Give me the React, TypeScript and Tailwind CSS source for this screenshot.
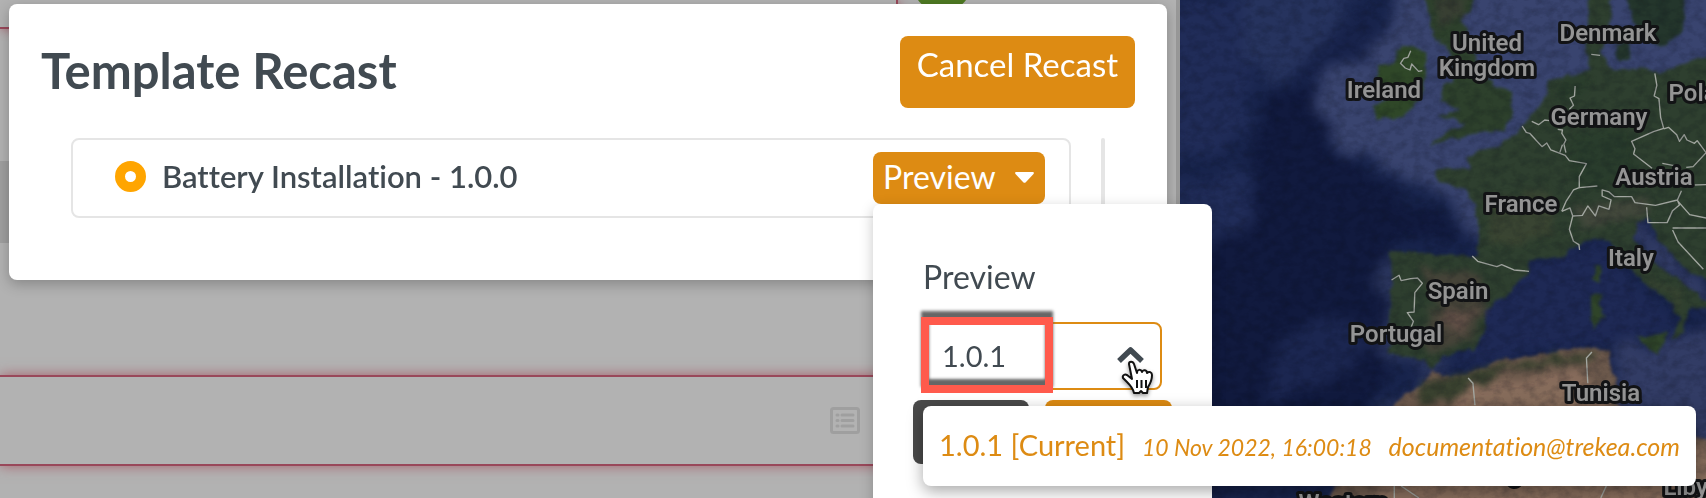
import React from "react";

const labels = [
  { name: "Denmark", x: 428, y: 41 },
  { name: "United", x: 307, y: 51 },
  { name: "Kingdom", x: 307, y: 76 },
  { name: "Ireland", x: 204, y: 98 },
  { name: "Germany", x: 419, y: 125 },
  { name: "Poland", x: 526, y: 101 },
  { name: "Austria", x: 474, y: 185 },
  { name: "France", x: 341, y: 212 },
  { name: "Italy", x: 451, y: 266 },
  { name: "Spain", x: 278, y: 299 },
  { name: "Portugal", x: 216, y: 342 },
  { name: "Tunisia", x: 421, y: 401 },
  { name: "Algeria", x: 344, y: 481 },
  { name: "Libya", x: 512, y: 495 },
  { name: "Western", x: 163, y: 511 },
];

function SatelliteMap() {
  return (
    <svg
      className="absolute inset-0 h-full w-full"
      viewBox="0 0 526 498"
      preserveAspectRatio="xMinYMin slice"
      role="img"
      aria-label="Map of Europe"
    >
      <defs>
        <filter id="coast" x="-5%" y="-5%" width="110%" height="110%" colorInterpolationFilters="sRGB">
          <feTurbulence type="fractalNoise" baseFrequency="0.03" numOctaves="3" seed="4" result="n" />
          <feDisplacementMap in="SourceGraphic" in2="n" scale="24" xChannelSelector="R" yChannelSelector="G" result="d" />
          <feGaussianBlur in="d" stdDeviation="4" />
        </filter>
        <filter id="sea" x="-20%" y="-20%" width="140%" height="140%" colorInterpolationFilters="sRGB">
          <feTurbulence type="fractalNoise" baseFrequency="0.012" numOctaves="4" seed="9" result="n" />
          <feDisplacementMap in="SourceGraphic" in2="n" scale="90" xChannelSelector="R" yChannelSelector="G" result="d" />
          <feGaussianBlur in="d" stdDeviation="18" />
        </filter>
        <filter id="soft" x="-20%" y="-20%" width="140%" height="140%" colorInterpolationFilters="sRGB">
          <feTurbulence type="fractalNoise" baseFrequency="0.02" numOctaves="4" seed="7" result="n" />
          <feDisplacementMap in="SourceGraphic" in2="n" scale="60" xChannelSelector="R" yChannelSelector="G" result="d" />
          <feGaussianBlur in="d" stdDeviation="10" />
        </filter>
        <filter id="grain" x="0" y="0" width="100%" height="100%" colorInterpolationFilters="sRGB">
          <feTurbulence type="fractalNoise" baseFrequency="0.09 0.12" numOctaves="4" seed="2" />
          <feColorMatrix values="0 0 0 0 0.03  0 0 0 0 0.04  0 0 0 0 0.08  2 0 0 0 -0.8" />
        </filter>
      </defs>
      <rect width="526" height="498" fill="#18244c" />

      {/* sea floor */}
      <g transform="translate(-10 0) scale(.3419 .3333)">
        <g filter="url(#sea)">
          <path fill="#111a3e" d="M300 280 430 260 480 440 640 560 800 640 860 720 640 740 640 1150 560 1260 380 1400 0 1500 0 820 240 640 250 420Z" />
          <path fill="#26335e" d="M200-60H560L470 130 300 260 200 150Z" />
          <path fill="#202c58" d="M0 0 200 0 240 240 200 420 0 480ZM30 560 200 520 260 640 120 760 0 740Z" />
          <path fill="#18234b" d="M560 30 640 100 560 200 420 240 330 230 450 130Z" />
          <path fill="#39446f" d="M650-60 640 100 560 190 450 230 430 340 480 410 540 470 700 530 820 600 900 740 1000 760 1500 600 1700 300 1700-60Z" />
          <path fill="#1e2955" d="M920 860 1250 720 1400 880 1480 960 1380 1020 1200 1040 820 1100Z" />
          <path fill="#323c65" d="M1300 1040 1600 980 1620 1400 1500 1320 1290 1200ZM1340 640 1430 700 1600 880 1600 960 1400 800Z" />
          <path fill="#2b365e" d="M640 740 600 800 640 960 600 1060 730 1100 740 1150 620 1230 460 1420 520 1440 800 1100Z" />
          <path fill="#1b2650" d="M340 1000 560 940 600 1040 420 1160 260 1240Z" />
        </g>
      </g>

      {/* land */}
      <g transform="translate(-10 0) scale(.3419 .3333)">
        <g filter="url(#coast)">
          <path fill="#2e3f2f" d="M1225-40 1220 60 1215 140 1230 215 1110 240 1100 290 1040 370 1000 410 960 440 870 465 880 505 775 510 790 545 870 570 890 620 905 690 900 770 645 755 650 830 645 1000 640 1060 740 1080 765 1110 800 1065 890 1050 930 980 920 930 1000 870 1050 815 1050 785 1140 770 1190 740 1240 715 1290 730 1330 790 1400 860 1470 910 1490 960 1470 1020 1500 1000 1520 920 1600 930 1500 850 1430 800 1360 720 1360 670 1400 650 1430 720 1500 800 1600 860 1600 165 1500 190 1430 220 1380 200 1300 215 1260 160 1290 100 1285-40Z" />
          <path fill="#24362c" d="M1335-40 1350 60 1390 120 1440 140 1500 90 1510-40ZM1300 130 1340 120 1350 170 1310 180Z" />
          <path fill="#2d402c" d="M735-40 760 60 770 110 820 150 830 240 800 250 790 300 850 330 785 345 860 370 830 390 755 440 830 415 900 400 980 390 1005 340 995 280 940 250 900 200 880 130 850 60 890 10 890-40Z" />
          <path fill="#2f4728" d="M665 150 710 135 755 160 750 220 730 300 680 350 605 360 595 320 640 290 600 240 610 200 660 185Z" />
          <path fill="#6c594c" d="M640 1225 740 1150 765 1115 800 1130 870 1130 960 1085 1080 1065 1220 1040 1290 1050 1280 1090 1310 1140 1290 1200 1340 1240 1450 1290 1540 1310 1600 1320 1600 1540 430 1540 500 1440Z" />
          <path fill="#2f4429" d="M1240 795 1258 800 1255 850 1238 845ZM1230 890 1262 880 1265 960 1235 985ZM1365 1010 1455 1000 1430 1065Z" />
        </g>
        <g filter="url(#soft)">
          <path fill="#48443a" opacity=".9" d="M730 800 900 820 930 880 890 1020 760 1060 740 980 780 900Z" />
          <path fill="#66534a" opacity=".8" d="M800 920 890 930 870 1000 800 990Z" />
          <path fill="#8a6e5d" opacity=".9" d="M860 1160 1200 1110 1260 1200 1400 1280 1600 1360 1600 1540 560 1540 800 1260Z" />
          <path fill="#39412f" d="M740 1150 960 1095 1260 1050 1240 1080 980 1110 840 1180 720 1230Z" />
          <path fill="#474a3e" opacity=".8" d="M1180 620 1400 590 1380 640 1200 700Z" />
          <path fill="#3f4733" opacity=".7" d="M930 600 1100 560 1140 700 940 740ZM1330 780 1480 880 1500 930 1400 840Z" />
          <path fill="#283c2b" opacity=".7" d="M1160 400 1340 380 1380 520 1200 580ZM1150 240 1220 210 1210 280 1120 300Z" />
          <path fill="#3b3f34" opacity=".8" d="M770-10H860L850 60 780 80Z" />
        </g>
        <g fill="none" stroke="#a3a7a1" strokeWidth="4" strokeLinejoin="round">
          <path d="M704 152 696 172 684 175 674 190 688 204 702 210 707 192 727 214 738 212M1232 163 1258 166" />
          <path d="M1185 258 1183 288 1170 294 1180 316 1168 328M1110 362 1096 360 1078 374 1058 364M1030 378 1042 397 1052 400 1088 440 1102 429 1114 450 1156 466 1168 482 1218 491 1197 530 1197 563 1180 570 1158 605 1146 634" />
          <path d="M1134 388 1148 390 1146 400 1158 420 1152 432 1158 458M1148 434 1140 458M1418 220 1424 256 1416 288 1430 296 1435 352 1444 385 1414 395 1350 424 1360 446 1356 462 1410 505" />
          <path d="M1444 387 1458 382 1482 404 1490 424 1504 404 1512 420 1534 430 1542 422 1568 458 1530 500 1510 502M1440 490 1490 500M1568 554 1496 556M1197 563 1250 558M1146 634 1170 624 1178 648 1206 646 1222 618 1244 648 1254 618 1284 628 1290 600 1264 588 1264 570 1284 576 1300 590 1350 590 1360 608 1420 616 1484 600 1496 572M1178 648 1168 688 1180 724 1196 734 1198 750M1484 600 1490 615 1470 632 1454 668 1398 668 1394 622M1486 604 1520 644 1568 654M1470 684 1568 684M1470 690 1486 726 1560 808" />
          <path d="M884 768 900 784 956 800 970 794 1006 810 1050 814M648 840 670 826 676 842 704 836 724 834 738 850 716 878 714 936 694 938 712 964 706 980M1234 1056 1218 1074 1222 1150M872 1134 886 1150 892 1216M656 1458V1500M676 1458 728 1494M1276 1458 1260 1494" />
        </g>
      </g>
      <rect width="526" height="498" filter="url(#grain)" opacity=".22" />

      <g
        className="font-['Roboto',sans-serif] text-[24px] font-semibold"
        fill="#949494"
        stroke="#121315"
        strokeWidth="6"
        strokeLinejoin="round"
        paintOrder="stroke"
        textAnchor="middle"
      >
        {labels.map((l) => (
          <text key={l.name} x={l.x} y={l.y}>
            {l.name}
          </text>
        ))}
      </g>
    </svg>
  );
}

function DimmedList() {
  return (
    <div className="absolute inset-0 flex flex-col overflow-hidden">
      <div className="flex h-[29px] items-start">
        <div className="h-full w-[76.4%] border-r-2 border-b-2 border-[#99485a] shadow-[0_0_12px_#a8606c]"></div>
        <div className="-mt-12 ml-[14px] size-[60px] rounded-full bg-[#4f7a23]"></div>
      </div>
      <div className="mt-[132px] h-[82px] w-[76%] shrink-0 bg-[#9f9f9f]"></div>
      <div className="mt-[132px] flex h-[91px] shrink-0 items-center border-y-2 border-[#99485a] shadow-[0_0_12px_#a8606c]">
        <div className="flex h-full w-full items-center bg-[#b2b2b2]">
          <svg className="ml-[70.6%]" width="30" height="27" viewBox="0 0 30 27" fill="none" stroke="#9f9f9f">
            <rect x="1.5" y="1.5" width="27" height="24" rx="2" strokeWidth="3" />
            <path strokeWidth="3" strokeLinecap="round" d="M7 8h1M12 8h11M7 13.5h1M12 13.5h11M7 19h1M12 19h11" />
          </svg>
        </div>
      </div>
    </div>
  );
}

function HandCursor() {
  return (
    <svg
      className="pointer-events-none absolute right-[7px] -bottom-[6px] z-10 drop-shadow-[0_2px_2px_rgba(0,0,0,0.4)]"
      width="34"
      height="36"
      viewBox="0 0 34 36"
    >
      <path
        fill="#fff"
        stroke="#111"
        strokeWidth="2"
        strokeLinejoin="round"
        d="M8 4C8 1 12 1 13 4L16 13C16 9 20 9 21 12C22 9 26 10 26 13C28 11 31 12 31 15C31 20 29 24 27 27L26 33H22L20 31L18 33H13C12 28 9 25 6 22L2 18C1 15 4 14 6 15L11 19Z"
      />
      <path stroke="#111" strokeWidth="2" d="M16 20v8M20.500 20v8M25 20v8" />
    </svg>
  );
}

function PreviewMenu() {
  return (
    <div className="absolute top-full left-0 w-[339px] rounded-t-lg bg-white px-[50px] pt-[53px] pb-12 shadow-[0_4px_14px_rgba(0,0,0,0.22)]">
      <label htmlFor="version" className="block text-[32px] leading-10 text-[#414a51]">
        Preview
      </label>
      <div className="relative mt-[25px] -ml-px">
        <select
          id="version"
          className="block h-[68px] w-full appearance-none rounded-lg border-2 border-[#dd8b13] bg-white pl-[18px] text-[29px] text-[#414a51] outline-none"
        >
          <option>1.0.1</option>
        </select>
        <div className="pointer-events-none absolute -top-[5px] -left-px h-[76px] w-[132px] border-8 border-[#ff5a4c] shadow-[0_-6px_3px_#666,inset_0_-6px_3px_#666]"></div>
        <svg
          className="pointer-events-none absolute top-6 right-[18px]"
          width="27"
          height="17"
          viewBox="0 0 27 17"
          fill="none"
          stroke="#414a51"
          strokeWidth="5.500"
          strokeLinejoin="round"
        >
          <path d="M2 15 13.500 4 25 15" />
        </svg>
        <HandCursor />
      </div>
      <div className="mt-[10px] -mr-[10px] -ml-[10px] flex h-16 gap-4">
        <button aria-label="Close" className="w-[116px] rounded-lg bg-[#4a4a4a]"></button>
        <button aria-label="Apply" className="flex-1 rounded-lg bg-[#dd8b13]"></button>
      </div>
      <ul className="absolute top-[202px] left-[50px] z-20 rounded-lg bg-white shadow-[0_5px_16px_rgba(0,0,0,0.35)]">
        <li>
          <button className="flex h-20 w-[773px] items-baseline justify-between rounded-lg px-4 pt-[19px] text-left whitespace-nowrap text-[#dd8b13]">
            <span className="text-[29px] leading-10">1.0.1 [Current]</span>
            <span className="text-[23px] italic">10 Nov 2022, 16:00:18</span>
            <span className="text-[25px] italic">documentation@trekea.com</span>
          </button>
        </li>
      </ul>
    </div>
  );
}

export default function App() {
  return (
    <main className="flex min-h-screen overflow-hidden bg-[#b2b2b2] font-['Lato',sans-serif] [font-variant-ligatures:none]">
      <section className="relative z-10 w-[69.17%] border-r-4 border-[#999]">
        <DimmedList />
        <div className="relative mt-1 mr-[9px] ml-[9px] rounded-lg bg-white pt-8 pr-8 pb-[62px] pl-8 shadow-[0_4px_14px_rgba(0,0,0,0.25)]">
          <div className="flex items-start justify-between">
            <h1 className="pt-1 text-[49px] leading-[60px] font-bold text-[#414a51]">
              Template Recast
            </h1>
            <button className="h-[72px] rounded-lg bg-[#dd8b13] px-[17px] pb-[14px] text-[33px] text-white">
              Cancel Recast
            </button>
          </div>
          <div className="mt-[30px] ml-[30px] flex justify-between">
            <div className="flex h-20 flex-1 items-center rounded-lg border-2 border-[#e5e5e5] pr-6 pl-[42px]">
              <input
                id="template"
                type="radio"
                defaultChecked
                className="-mt-1 size-[31px] appearance-none rounded-full border-[10px] border-[#ffa500] bg-white"
              />
              <label htmlFor="template" className="-mt-1 ml-4 text-[31px] font-semibold text-[#414a51]">
                Battery Installation - 1.0.0
              </label>
              <div className="relative ml-auto">
                <button className="flex h-[52px] w-[172px] items-center justify-between rounded-lg bg-[#dd8b13] pr-[11px] pb-[2px] pl-[10px] text-[32px] text-white">
                  Preview
                  <svg width="19" height="11" viewBox="0 0 19 11" fill="#fff">
                    <path d="M1.500 0h16c1.400 0 1.700 1 1 1.900l-8 8.500c-.6.600-1.400.600-2 0l-8-8.500C-.2 1 .1 0 1.500 0Z" />
                  </svg>
                </button>
                <PreviewMenu />
              </div>
            </div>
            <div className="mr-[30px] ml-[30px] w-1 rounded-full bg-[#e5e5e5]"></div>
          </div>
        </div>
      </section>
      <section className="relative flex-1">
        <SatelliteMap />
      </section>
    </main>
  );
}
